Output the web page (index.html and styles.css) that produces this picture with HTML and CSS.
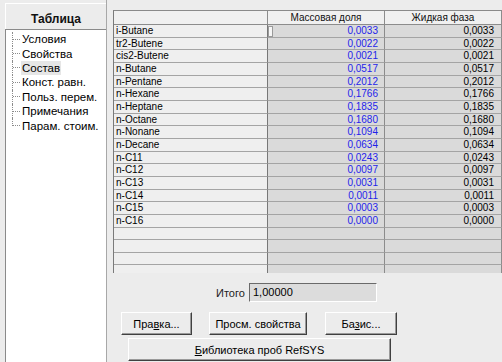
FILE: index.html
```html
<!DOCTYPE html>
<html lang="ru">
<head>
    <meta charset="UTF-8">
    <title>Состав</title>
    <link rel="stylesheet" href="styles.css">
</head>
<body>
    <div class="window">
        <div class="sidebar">
            <div class="sidebar-head">Таблица</div>
            <ul class="tree">
                <li><span class="twig"></span><span class="label">Условия</span></li>
                <li><span class="twig"></span><span class="label">Свойства</span></li>
                <li class="selected"><span class="twig"></span><span class="label">Состав</span></li>
                <li><span class="twig"></span><span class="label">Конст. равн.</span></li>
                <li><span class="twig"></span><span class="label">Польз. перем.</span></li>
                <li><span class="twig"></span><span class="label">Примечания</span></li>
                <li class="last"><span class="twig"></span><span class="label">Парам. стоим.</span></li>
            </ul>
        </div>

        <div class="main">
            <div class="grid">
                <div class="row head">
                    <div class="cell"></div>
                    <div class="cell">Массовая доля</div>
                    <div class="cell">Жидкая фаза</div>
                </div>
                <div class="row">
                    <div class="cell name">i-Butane</div>
                    <div class="cell mass"><span class="caret"></span><span>0,0033</span></div>
                    <div class="cell liquid">0,0033</div>
                </div>
                <div class="row">
                    <div class="cell name">tr2-Butene</div>
                    <div class="cell mass">0,0022</div>
                    <div class="cell liquid">0,0022</div>
                </div>
                <div class="row">
                    <div class="cell name">cis2-Butene</div>
                    <div class="cell mass">0,0021</div>
                    <div class="cell liquid">0,0021</div>
                </div>
                <div class="row">
                    <div class="cell name">n-Butane</div>
                    <div class="cell mass">0,0517</div>
                    <div class="cell liquid">0,0517</div>
                </div>
                <div class="row">
                    <div class="cell name">n-Pentane</div>
                    <div class="cell mass">0,2012</div>
                    <div class="cell liquid">0,2012</div>
                </div>
                <div class="row">
                    <div class="cell name">n-Hexane</div>
                    <div class="cell mass">0,1766</div>
                    <div class="cell liquid">0,1766</div>
                </div>
                <div class="row">
                    <div class="cell name">n-Heptane</div>
                    <div class="cell mass">0,1835</div>
                    <div class="cell liquid">0,1835</div>
                </div>
                <div class="row">
                    <div class="cell name">n-Octane</div>
                    <div class="cell mass">0,1680</div>
                    <div class="cell liquid">0,1680</div>
                </div>
                <div class="row">
                    <div class="cell name">n-Nonane</div>
                    <div class="cell mass">0,1094</div>
                    <div class="cell liquid">0,1094</div>
                </div>
                <div class="row">
                    <div class="cell name">n-Decane</div>
                    <div class="cell mass">0,0634</div>
                    <div class="cell liquid">0,0634</div>
                </div>
                <div class="row">
                    <div class="cell name">n-C11</div>
                    <div class="cell mass">0,0243</div>
                    <div class="cell liquid">0,0243</div>
                </div>
                <div class="row">
                    <div class="cell name">n-C12</div>
                    <div class="cell mass">0,0097</div>
                    <div class="cell liquid">0,0097</div>
                </div>
                <div class="row">
                    <div class="cell name">n-C13</div>
                    <div class="cell mass">0,0031</div>
                    <div class="cell liquid">0,0031</div>
                </div>
                <div class="row">
                    <div class="cell name">n-C14</div>
                    <div class="cell mass">0,0011</div>
                    <div class="cell liquid">0,0011</div>
                </div>
                <div class="row">
                    <div class="cell name">n-C15</div>
                    <div class="cell mass">0,0003</div>
                    <div class="cell liquid">0,0003</div>
                </div>
                <div class="row">
                    <div class="cell name">n-C16</div>
                    <div class="cell mass">0,0000</div>
                    <div class="cell liquid">0,0000</div>
                </div>
                <div class="row">
                    <div class="cell name"></div>
                    <div class="cell mass"></div>
                    <div class="cell liquid"></div>
                </div>
                <div class="row">
                    <div class="cell name"></div>
                    <div class="cell mass"></div>
                    <div class="cell liquid"></div>
                </div>
                <div class="row">
                    <div class="cell name"></div>
                    <div class="cell mass"></div>
                    <div class="cell liquid"></div>
                </div>
                <div class="row">
                    <div class="cell name"></div>
                    <div class="cell mass"></div>
                    <div class="cell liquid"></div>
                </div>
            </div>

            <div class="total">
                <span class="total-label">Итого</span>
                <div class="total-box">1,00000</div>
            </div>

            <div class="buttons">
                <button class="btn btn-edit">Пра<u>в</u>ка...</button>
                <button class="btn btn-props">Просм. свойства</button>
                <button class="btn btn-basis">Ба<u>з</u>ис...</button>
            </div>
            <div class="buttons second">
                <button class="btn btn-lib"><u>Б</u>иблиотека проб RefSYS</button>
            </div>
        </div>
    </div>
</body>
</html>
```

FILE: styles.css
```css
body {
    margin: 0;
    width: 502px;
    height: 362px;
    overflow: hidden;
    background-color: #ececec;
    font-family: "Liberation Sans", Arial, sans-serif;
    font-size: 11px;
    color: #000;
}
.window {
    display: flex;
    height: 362px;
}

/* left panel */
.sidebar {
    width: 107px;
    flex: none;
    box-sizing: border-box;
    padding: 3px 0 0 5px;
    border-right: 1px solid #a8a8a8;
    display: flex;
    flex-direction: column;
}
.sidebar-head {
    height: 26px;
    box-sizing: border-box;
    border-top: 1px solid #fff;
    border-left: 1px solid #fff;
    padding-top: 8px;
    line-height: 14px;
    font-size: 12px;
    font-weight: bold;
    text-align: center;
    color: #111;
}
.tree {
    flex: 1;
    margin: 0;
    padding: 2px 0 0 0;
    list-style: none;
    background: #fff;
    border-top: 1px solid #8a8a8a;
    border-left: 1px solid #8a8a8a;
    font-size: 11.5px;
}
.tree li {
    display: flex;
    height: 14.4px;
    align-items: center;
}
.twig {
    align-self: stretch;
    width: 8px;
    margin-left: 6px;
    border-left: 1px dotted #8c8c8c;
    background-image: repeating-linear-gradient(to right, #8c8c8c 0 1px, transparent 1px 2px);
    background-size: 100% 1px;
    background-position: left center;
    background-repeat: no-repeat;
}
.tree li.last .twig {
    align-self: flex-start;
    height: 50%;
    background-position: left bottom;
}
.label {
    padding: 0 1px;
    line-height: 14px;
    white-space: nowrap;
}
.tree li.selected .label {
    background: #e6e6e6;
}

/* grid */
.main {
    flex: 1;
    padding: 10px 0 0 6px;
    display: flex;
    flex-direction: column;
}
.grid {
    height: 263px;
    flex: none;
    box-sizing: border-box;
    overflow: hidden;
    border-top: 1px solid #8a8a8a;
    border-left: 1px solid #7a7a7a;
    font-size: 10px;
}
.row {
    display: grid;
    grid-template-columns: 154px 117px 117px;
    height: 12.67px;
}
.cell {
    box-sizing: border-box;
    border-bottom: 1px solid #a4a4a4;
    border-right: 1px solid #8c8c8c;
    line-height: 11.67px;
    white-space: nowrap;
    overflow: hidden;
}
.row.head {
    height: 14px;
}
.row.head .cell {
    background: #f0f0f0;
    border-bottom-color: #8c8c8c;
    text-align: center;
    line-height: 13px;
    color: #111;
}
.name {
    background: #efefef;
    padding-left: 2px;
    border-right-color: #777;
}
.mass {
    display: flex;
    justify-content: flex-end;
    background: #dadada;
    padding-right: 6px;
    color: #1f1fea;
}
.caret {
    width: 3px;
    height: 9px;
    margin: 1px auto 0 0;
    border: 1px solid #9a9a9a;
    background: #f6f6f6;
}
.liquid {
    background: #dadada;
    text-align: right;
    padding-right: 7px;
}

/* total */
.total {
    display: flex;
    align-items: center;
    margin-top: 10px;
    padding-left: 103px;
}
.total-label {
    width: 31px;
    margin-right: 2px;
    overflow: hidden;
    white-space: nowrap;
    color: #222;
}
.total-box {
    width: 128px;
    height: 19px;
    box-sizing: border-box;
    border-top: 1px solid #6a6a6a;
    border-left: 1px solid #6a6a6a;
    border-bottom: 1px solid #fff;
    border-right: 1px solid #fff;
    background: #dcdcdc;
    padding-left: 3px;
    line-height: 17px;
}

/* buttons */
.buttons {
    display: flex;
    margin-top: 10px;
    padding-left: 8px;
}
.buttons.second {
    margin-top: 3px;
    padding-left: 15px;
}
.btn {
    height: 23px;
    margin: 0;
    padding: 0;
    box-sizing: border-box;
    background: #ececec;
    border: 1px solid;
    border-color: #fff #404040 #404040 #fff;
    box-shadow: inset -1px -1px 0 #9a9a9a;
    font-family: "Liberation Sans", Arial, sans-serif;
    font-size: 11px;
    color: #000;
}
.btn-edit {
    width: 71px;
}
.btn-props {
    width: 98px;
    margin-left: 17px;
}
.btn-basis {
    width: 72px;
    margin-left: 18px;
}
.btn-lib {
    width: 263px;
}
```
